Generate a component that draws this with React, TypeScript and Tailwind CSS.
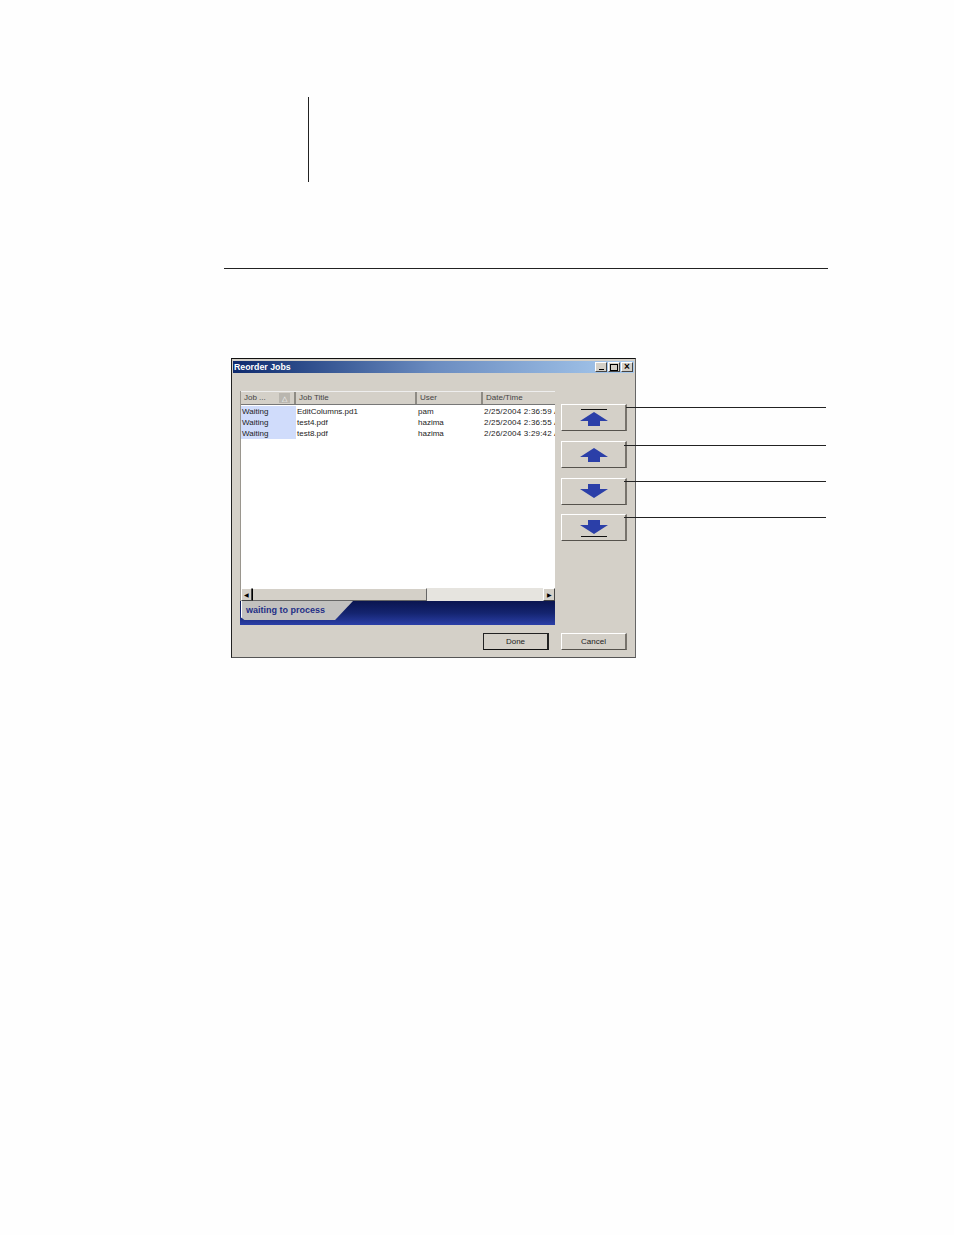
function ArrowIcon({ down, y, barY }: { down?: boolean; y: number; barY?: number }) {
  // head is 9px tall, shaft runs 5px below it
  const d = down
    ? `M1 ${y + 5} L9 ${y + 5} V${y} H21 V${y + 5} L29 ${y + 5} L15 ${y + 14} Z`
    : `M1 ${y + 9} L15 ${y} L29 ${y + 9} L21 ${y + 9} V${y + 14} H9 V${y + 9} Z`;
  return (
    <svg width="30" height="25" viewBox="0 0 30 25" className="block">
      {barY !== undefined && <rect x="2" y={barY} width="26" height="1" fill="#111" />}
      <path d={d} fill="#2b3fa8" />
    </svg>
  );
}

function MoveButton({ down, y, barY, className }: { down?: boolean; y: number; barY?: number; className?: string }) {
  return (
    <div
      className={`flex h-[27px] w-[66px] items-center justify-center border border-t-white border-l-white border-r-2 border-r-[#77736c] border-b-[#55524c] ${className ?? ""}`}
    >
      <ArrowIcon down={down} y={y} barY={barY} />
    </div>
  );
}

const rows = [
  ["Waiting", "EditColumns.pd1", "pam", "2/25/2004 2:36:59 A"],
  ["Waiting", "test4.pdf", "hazima", "2/25/2004 2:36:55 A"],
  ["Waiting", "test8.pdf", "hazima", "2/26/2004 3:29:42 A"],
];

function HeaderCell({ label, width, children }: { label: string; width: string; children?: React.ReactNode }) {
  return (
    <div className={`flex h-full items-center justify-between border-r-2 border-[#8e8b84] pl-[3px] pr-[4px] text-[#444] ${width}`}>
      <span>{label}</span>
      {children}
    </div>
  );
}

export default function App() {
  return (
    <div className="relative h-[1235px] w-[954px] overflow-hidden bg-[#fefefe] font-['Liberation_Sans',Arial,sans-serif]">
      <div className="ml-[308px] pt-[97px]">
        <div className="h-[85px] w-px bg-[#222]" />
      </div>
      <div className="ml-[224px] mt-[86px] h-px w-[604px] bg-[#222]" />

      {/* dialog */}
      <div className="ml-[231px] mt-[89px] flex h-[300px] w-[405px] flex-col border border-t-[#111] border-l-[#222] border-r-[#666] border-b-[#555] bg-[#d4d0c8] p-px text-[8px] leading-none">
        <div className="mt-px flex h-[12px] items-center justify-between bg-gradient-to-r from-[#0f2a6e] via-[#6b8cc0] to-[#a9cbee] pl-[1px] pr-[1px]">
          <span className="text-[8.8px] font-bold text-white">Reorder Jobs</span>
          <div className="flex gap-[1px]">
            <div className="flex h-[10px] w-[12px] items-end justify-center border border-t-white border-l-white border-r-[#444] border-b-[#444] bg-[#d4d0c8] pb-px">
              <div className="h-px w-[5px] bg-black" />
            </div>
            <div className="flex h-[10px] w-[12px] items-center justify-center border border-t-white border-l-white border-r-[#444] border-b-[#444] bg-[#d4d0c8]">
              <div className="h-[7px] w-[8px] border border-black" />
            </div>
            <div className="flex h-[10px] w-[12px] items-center justify-center border border-t-white border-l-white border-r-[#444] border-b-[#444] bg-[#d4d0c8] text-[10px] font-bold text-black">
              ×
            </div>
          </div>
        </div>

        <div className="ml-[7px] mt-[18px] flex">
          {/* job list */}
          <div className="flex h-[234px] w-[315px] flex-col border-l border-[#9a968e] bg-white">
            <div className="flex h-[14px] items-center border-b border-t border-b-[#777] border-t-[#eee] bg-[#d4d0c8]">
              <HeaderCell label="Job ..." width="w-[55px]">
                <div className="flex h-[10px] w-[11px] items-center justify-center bg-[#b9b6af] text-[7px] text-white">△</div>
              </HeaderCell>
              <HeaderCell label="Job Title" width="w-[121px]" />
              <HeaderCell label="User" width="w-[66px]" />
              <div className="pl-[3px] text-[#444]">Date/Time</div>
            </div>
            <div className="flex-1 overflow-hidden">
              {rows.map((r, i) => (
                <div key={i} className={`flex h-[11px] items-center text-[#222] ${i === 0 ? "mt-px" : ""}`}>
                  <div className="flex h-full w-[55px] items-center bg-[#d0dcfb] pl-[1px]">{r[0]}</div>
                  <div className="w-[121px] pl-[1px]">{r[1]}</div>
                  <div className="w-[66px] pl-[1px]">{r[2]}</div>
                  <div className="flex-1 overflow-hidden whitespace-nowrap pl-[1px] tracking-[0.2px]">{r[3]}</div>
                </div>
              ))}
            </div>
            {/* scrollbar */}
            <div className="flex h-[13px] items-center bg-[#e6e4df]">
              <div className="flex h-full w-[11px] items-center justify-center border border-t-white border-l-white border-r-[#444] border-b-[#444] bg-[#d4d0c8] text-[6px] text-black">◀</div>
              <div className="h-full w-[175px] border border-t-white border-r-[#666] border-b-[#666] bg-[#d4d0c8]" />
              <div className="flex-1" />
              <div className="flex h-full w-[12px] items-center justify-center border border-t-white border-l-white border-r-[#444] border-b-[#444] bg-[#d4d0c8] text-[6px] text-black">▶</div>
            </div>
            {/* status banner */}
            <div className="-ml-px h-[24px] bg-gradient-to-b from-[#0a1550] via-[#14246f] to-[#2b3fa8] pl-px">
              <div className="h-[19px] w-[112px] border-l border-white bg-[#c2c1bf] pl-[4px] pt-[5px] text-[9px] font-bold text-[#1f2f86] [clip-path:polygon(0_0,100%_0,84%_100%,3%_100%,0_85%)]">
                waiting to process
              </div>
            </div>
          </div>

          {/* move buttons */}
          <div className="ml-[6px] mt-[13px] flex flex-col">
            <MoveButton y={7} barY={4} />
            <MoveButton y={6} className="mt-[10px]" />
            <MoveButton down y={5} className="mt-[10px]" />
            <MoveButton down y={5} barY={21} className="mt-[9px]" />
          </div>
        </div>

        <div className="ml-[250px] mt-[8px] flex text-[#222]">
          <div className="flex h-[17px] w-[66px] items-center justify-center border border-r-2 border-t-[#222] border-l-[#222] border-r-[#222] border-b-[#111]">Done</div>
          <div className="ml-[12px] flex h-[17px] w-[66px] items-center justify-center border border-r-2 border-t-white border-l-white border-r-[#77736c] border-b-[#55524c]">Cancel</div>
        </div>
      </div>

      {/* callout leader lines */}
      <div className="absolute left-[626px] top-[407px] h-px w-[200px] bg-[#222]" />
      <div className="absolute left-[624px] top-[445px] h-px w-[202px] bg-[#222]" />
      <div className="absolute left-[624px] top-[481px] h-px w-[202px] bg-[#222]" />
      <div className="absolute left-[624px] top-[517px] h-px w-[202px] bg-[#222]" />
    </div>
  );
}
